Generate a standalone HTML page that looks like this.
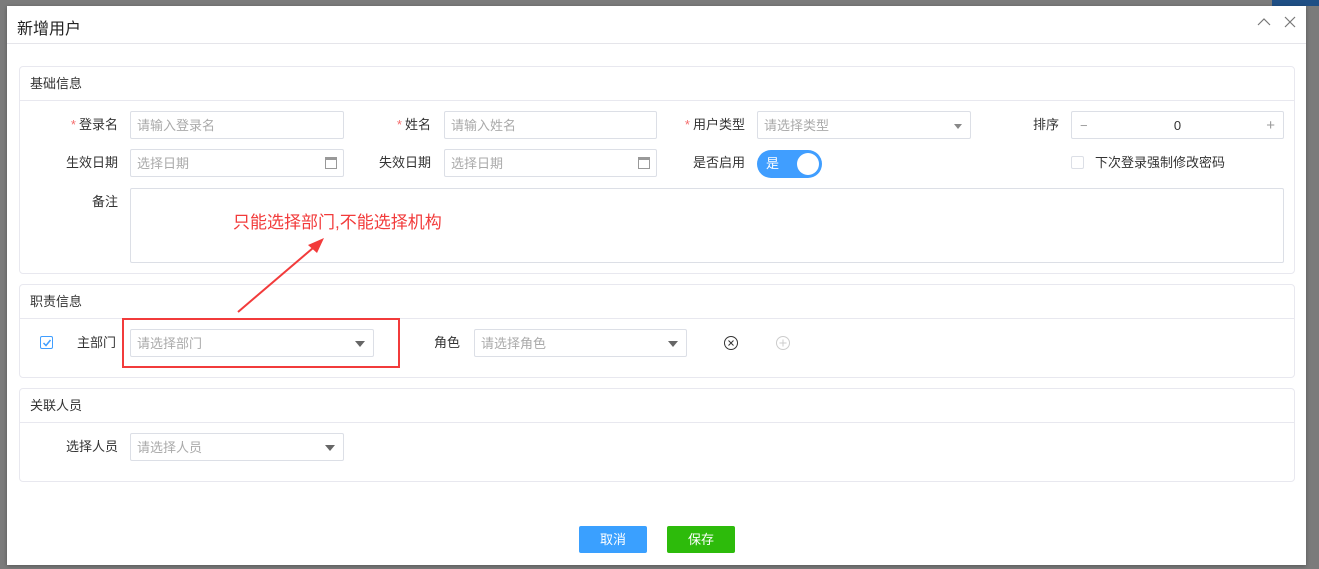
<!DOCTYPE html>
<html><head><meta charset="utf-8"><style>
*{box-sizing:border-box;margin:0;padding:0}
body{width:1319px;height:569px;background:#7b7b7b;font-family:"Liberation Sans","Noto Sans CJK SC",sans-serif;font-size:13px;color:#333;position:relative;overflow:hidden}
.a{position:absolute}
.dlg{left:7px;top:6px;width:1299px;height:559px;background:#fff;box-shadow:0 1px 4px rgba(0,0,0,.3)}
.panel{position:absolute;left:12px;width:1276px;border:1px solid #e8e8ef;border-radius:4px;background:#fff}
.ph{height:34px;border-bottom:1px solid #e8e8ef;padding-left:10px;line-height:33px;font-size:13px;color:#333}
.lbl{position:absolute;font-size:13px;color:#333;text-align:right;line-height:28px}
.inp{position:absolute;height:28px;border:1px solid #dcdfe6;border-radius:2px;color:#aaa;line-height:28px;padding-left:6px;font-size:13px;background:#fff}
.st{color:#f56c6c;margin-right:3px}
.tri{position:absolute;right:8px;top:11px;width:0;height:0;border-left:5px solid transparent;border-right:5px solid transparent;border-top:6px solid #666}
.cal{position:absolute;right:6px;top:7px;width:12px;height:12px;border:1px solid #999;border-top-width:3px}
</style></head><body>
<div class="a" style="left:1272px;top:0;width:47px;height:6px;background:#1f4f85"></div>
<div class="a dlg">
 <div class="a" style="left:10px;top:9px;font-size:16px;color:#222">新增用户</div>
 <svg class="a" style="left:1250px;top:11px" width="14" height="10"><path d="M1 8 L7 2 L13 8" stroke="#777" fill="none" stroke-width="1.2"/></svg>
 <svg class="a" style="left:1277px;top:10px" width="12" height="12"><path d="M1 1 L11 11 M11 1 L1 11" stroke="#777" stroke-width="1.2"/></svg>
 <div class="a" style="left:0;top:37px;width:1299px;height:1px;background:#e5e5ea"></div>

 <div class="panel" style="top:60px;height:208px"><div class="ph">基础信息</div></div>
 <div class="panel" style="top:278px;height:94px"><div class="ph">职责信息</div></div>
 <div class="panel" style="top:382px;height:94px"><div class="ph">关联人员</div></div>

 <div class="lbl" style="left:40px;top:105px;width:71px"><span class="st">*</span>登录名</div>
 <div class="inp" style="left:123px;top:105px;width:214px">请输入登录名</div>
 <div class="lbl" style="left:355px;top:105px;width:69px"><span class="st">*</span>姓名</div>
 <div class="inp" style="left:437px;top:105px;width:213px">请输入姓名</div>
 <div class="lbl" style="left:660px;top:105px;width:78px"><span class="st">*</span>用户类型</div>
 <div class="inp" style="left:750px;top:105px;width:214px">请选择类型<div class="tri" style="border-top-color:#888;border-left-width:4px;border-right-width:4px;border-top-width:5px;top:12px"></div></div>
 <div class="lbl" style="left:1000px;top:105px;width:52px">排序</div>
 <div class="inp" style="left:1064px;top:105px;width:213px;color:#333;text-align:center;padding:0"><span style="position:absolute;left:8px;color:#999">−</span>0<span style="position:absolute;right:8px;color:#999;font-size:15px">+</span></div>

 <div class="lbl" style="left:40px;top:143px;width:71px">生效日期</div>
 <div class="inp" style="left:123px;top:143px;width:214px">选择日期<div class="cal"></div></div>
 <div class="lbl" style="left:355px;top:143px;width:69px">失效日期</div>
 <div class="inp" style="left:437px;top:143px;width:213px">选择日期<div class="cal"></div></div>
 <div class="lbl" style="left:660px;top:143px;width:78px">是否启用</div>
 <div class="a" style="left:750px;top:144px;width:65px;height:28px;border-radius:14px;background:#409eff;color:#fff;font-size:13px;line-height:28px;padding-left:9px">是<div class="a" style="right:3px;top:3px;width:22px;height:22px;border-radius:50%;background:#fff"></div></div>
 <div class="a" style="left:1064px;top:150px;width:13px;height:13px;border:1px solid #dcdfe6;border-radius:2px"></div>
 <div class="lbl" style="left:1088px;top:143px">下次登录强制修改密码</div>

 <div class="lbl" style="left:40px;top:182px;width:71px">备注</div>
 <div class="inp" style="left:123px;top:182px;width:1154px;height:75px"></div>
 <div class="a" style="left:226px;top:202px;font-size:17px;color:#f23b3b">只能选择部门,不能选择机构</div>
 <svg class="a" style="left:225px;top:228px" width="100" height="82"><path d="M6 78 L88 8" stroke="#f23b3b" stroke-width="2"/><path d="M92 4 L76 11 L85 19 Z" fill="#f23b3b"/></svg>

 <div class="a" style="left:33px;top:330px;width:13px;height:13px;border:1px solid #409eff;border-radius:2px"></div>
 <svg class="a" style="left:35px;top:332px" width="10" height="10"><path d="M1.5 5 L4 7.5 L8.5 2" stroke="#409eff" fill="none" stroke-width="1.5"/></svg>
 <div class="lbl" style="left:70px;top:323px">主部门</div>
 <div class="inp" style="left:123px;top:323px;width:244px">请选择部门<div class="tri"></div></div>
 <div class="a" style="left:115px;top:312px;width:278px;height:50px;border:2px solid #f23b3b"></div>
 <div class="lbl" style="left:427px;top:323px">角色</div>
 <div class="inp" style="left:467px;top:323px;width:213px">请选择角色<div class="tri"></div></div>
 <svg class="a" style="left:716px;top:329px" width="16" height="16"><circle cx="8" cy="8" r="6.5" stroke="#333" fill="none"/><path d="M5.5 5.5 L10.5 10.5 M10.5 5.5 L5.5 10.5" stroke="#333"/></svg>
 <svg class="a" style="left:768px;top:329px" width="16" height="16"><circle cx="8" cy="8" r="6.5" stroke="#ccc" fill="none"/><path d="M8 4.5 V11.5 M4.5 8 H11.5" stroke="#ccc"/></svg>

 <div class="lbl" style="left:40px;top:427px;width:71px">选择人员</div>
 <div class="inp" style="left:123px;top:427px;width:214px">请选择人员<div class="tri"></div></div>

 <div class="a" style="left:572px;top:520px;width:68px;height:27px;background:#3aa0ff;border-radius:2px;color:#fff;text-align:center;line-height:27px">取消</div>
 <div class="a" style="left:660px;top:520px;width:68px;height:27px;background:#2dbb0b;border-radius:2px;color:#fff;text-align:center;line-height:27px">保存</div>
</div>
</body></html>
